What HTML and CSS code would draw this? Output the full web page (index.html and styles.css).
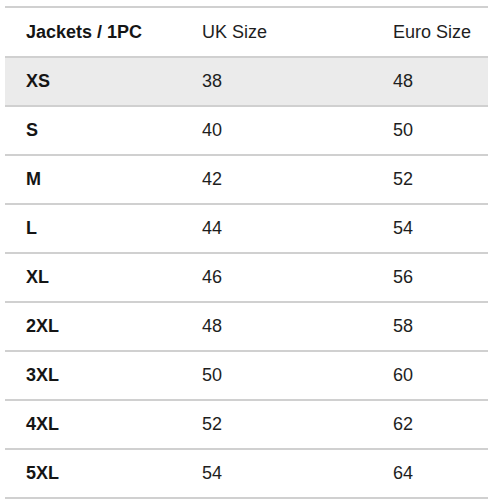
FILE: index.html
```html
<!DOCTYPE html>
<html>
<head>
<meta charset="utf-8">
<link rel="stylesheet" href="styles.css">
</head>
<body>
<div class="table">
  <div class="row head">
    <div class="cell name">Jackets / 1PC</div>
    <div class="cell">UK Size</div>
    <div class="cell">Euro Size</div>
  </div>
  <div class="row shade"><div class="cell name">XS</div><div class="cell">38</div><div class="cell">48</div></div>
  <div class="row"><div class="cell name">S</div><div class="cell">40</div><div class="cell">50</div></div>
  <div class="row"><div class="cell name">M</div><div class="cell">42</div><div class="cell">52</div></div>
  <div class="row"><div class="cell name">L</div><div class="cell">44</div><div class="cell">54</div></div>
  <div class="row"><div class="cell name">XL</div><div class="cell">46</div><div class="cell">56</div></div>
  <div class="row"><div class="cell name">2XL</div><div class="cell">48</div><div class="cell">58</div></div>
  <div class="row"><div class="cell name">3XL</div><div class="cell">50</div><div class="cell">60</div></div>
  <div class="row"><div class="cell name">4XL</div><div class="cell">52</div><div class="cell">62</div></div>
  <div class="row"><div class="cell name">5XL</div><div class="cell">54</div><div class="cell">64</div></div>
</div>
</body>
</html>
```
FILE: styles.css
```css
html, body {
  margin: 0;
  padding: 0;
  background: #ffffff;
}
body {
  font-family: "Liberation Sans", Arial, sans-serif;
  font-size: 18px;
  color: #1e1e1e;
}
.table {
  width: 483px;
  margin: 6px 0 0 5px;
  border-top: 2px solid #d0d0d0;
}
.row {
  display: grid;
  grid-template-columns: 176px 191px 1fr;
  height: 47px;
  align-items: center;
  border-bottom: 2px solid #d0d0d0;
}
.row.head {
  height: 48px;
}
.row.shade {
  background: #ebebeb;
}
.cell {
  padding-left: 21px;
  white-space: nowrap;
}
.name {
  font-weight: bold;
  color: #151515;
}
```
